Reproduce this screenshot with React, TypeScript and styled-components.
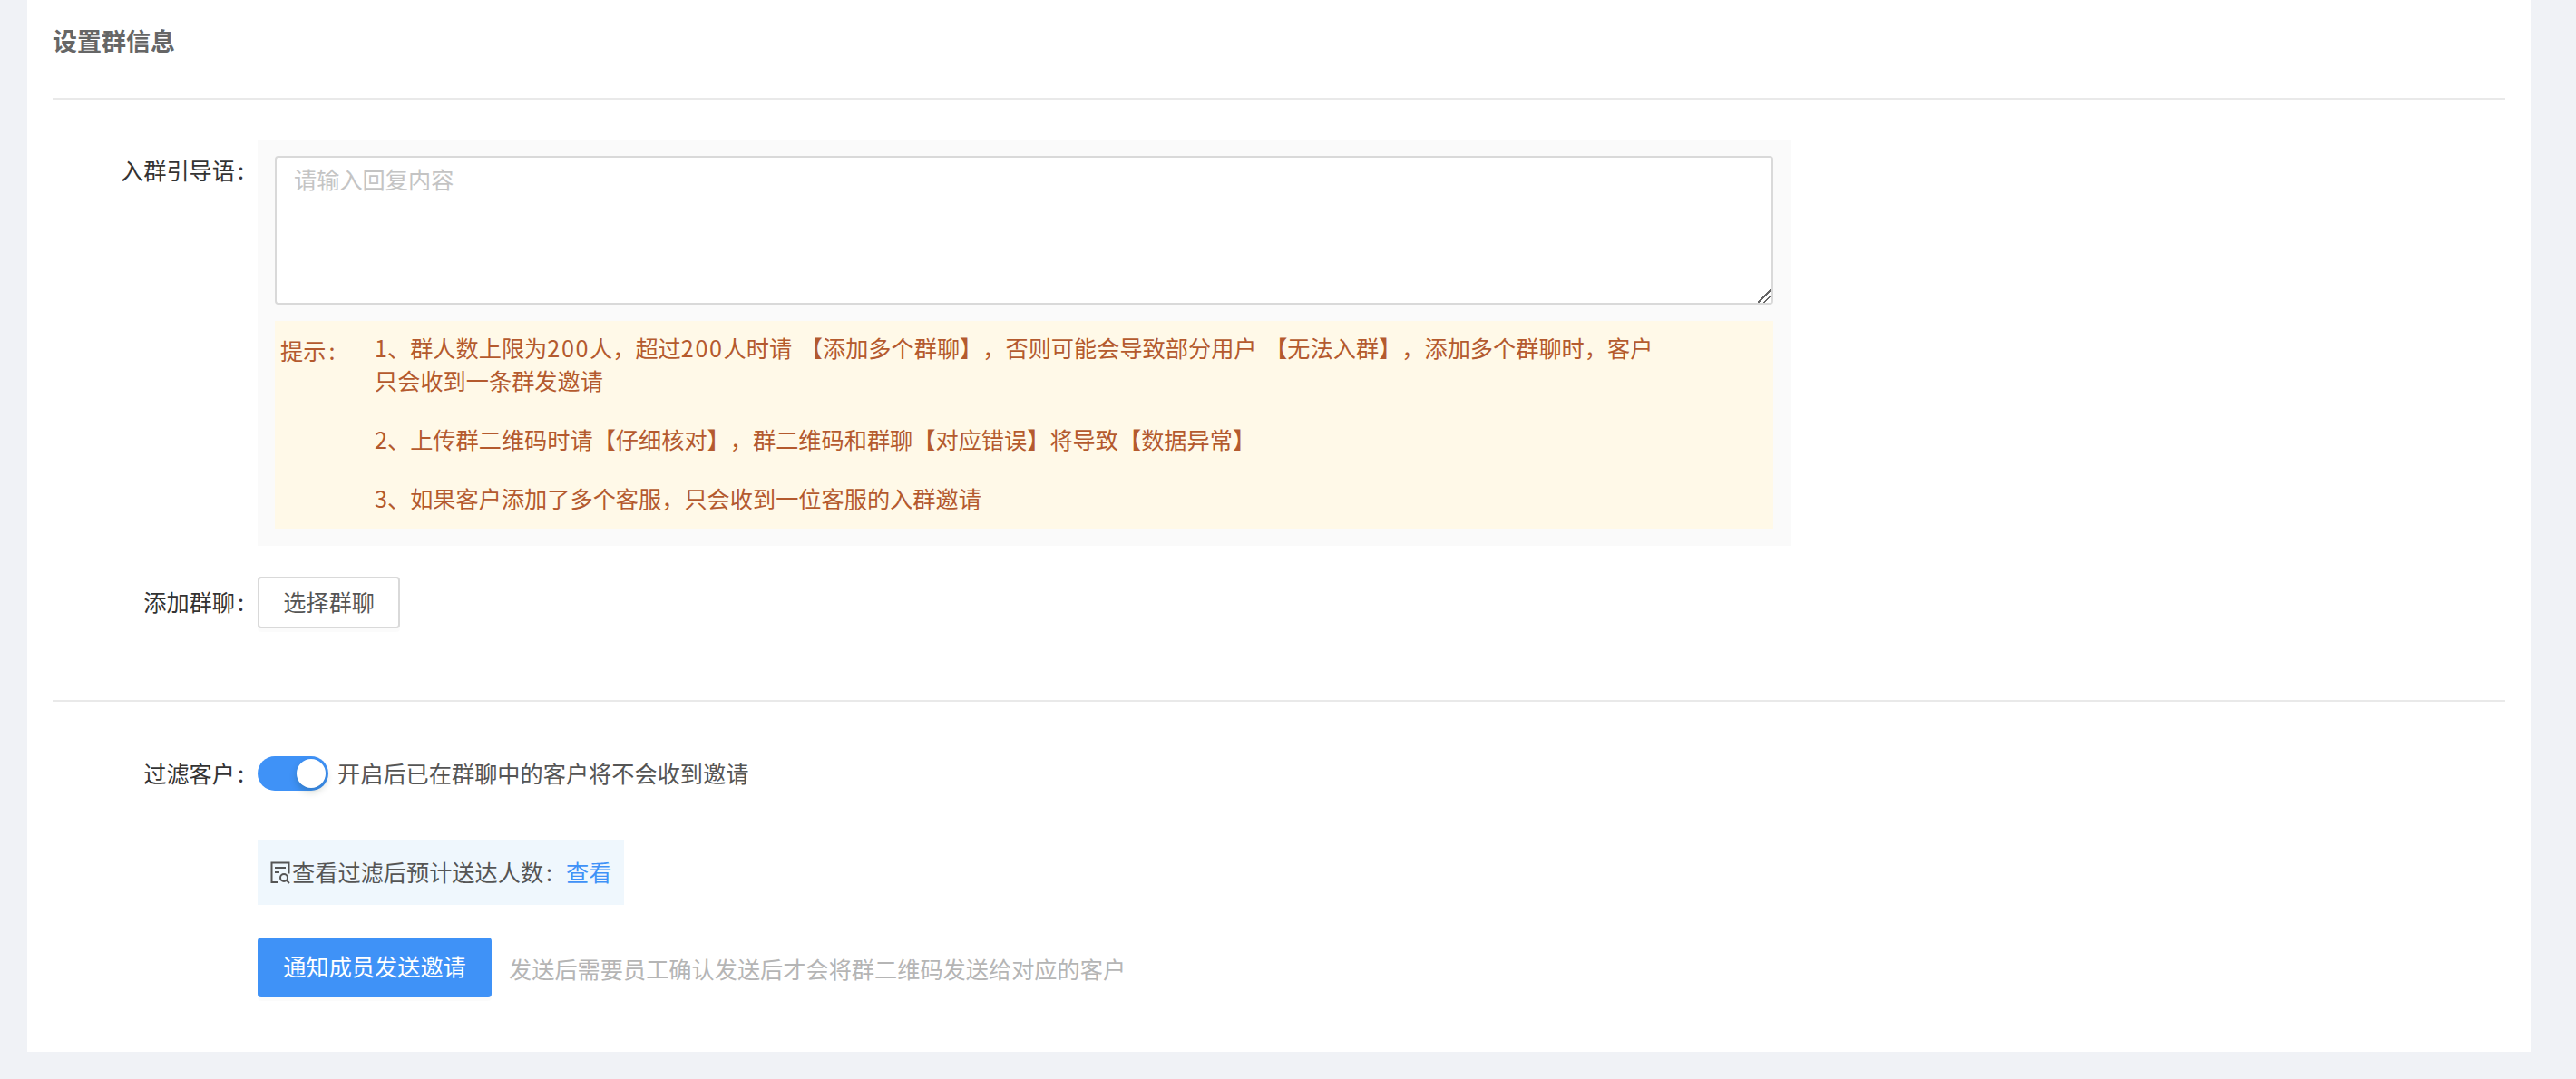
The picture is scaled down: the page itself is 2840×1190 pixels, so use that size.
import React from "react";
import styled, { createGlobalStyle } from "styled-components";

const GlobalStyle = createGlobalStyle`
  html, body {
    margin: 0;
    padding: 0;
    background: #f0f2f6;
  }
  body {
    font-family: "Noto Sans CJK SC", "Noto Sans", sans-serif;
    font-size: 25.2px;
    color: #555;
    text-spacing-trim: space-all;
  }
`;

const Page = styled.div`
  box-sizing: border-box;
  width: 2840px;
  height: 1190px;
  padding: 0 50px 30px 30px;
  overflow: hidden;
`;

const Card = styled.div`
  box-sizing: border-box;
  height: 1160px;
  padding: 0 28px;
  background: #fff;
`;

const Header = styled.div`
  box-sizing: border-box;
  height: 110px;
  padding-top: 27px;
  border-bottom: 2px solid #e9e9e9;
`;

const Title = styled.h2`
  margin: 0;
  font-size: 27px;
  line-height: 36px;
  font-weight: 600;
  color: #666;
`;

const Divider = styled.div<{ $top: number }>`
  height: 2px;
  background: #e9e9e9;
  margin-top: ${(p) => p.$top}px;
`;

const Row = styled.div<{ $top: number; $center?: boolean }>`
  display: grid;
  grid-template-columns: 226px 1fr;
  margin-top: ${(p) => p.$top}px;
  align-items: ${(p) => (p.$center ? "center" : "start")};
`;

const Label = styled.label<{ $top?: number }>`
  padding: ${(p) => p.$top || 0}px 15px ${(p) => (p.$top ? 0 : 3)}px 0;
  text-align: right;
  line-height: 34px;
  color: #333;
`;

const Colon = styled.span`
  margin-left: 3px;
`;

const Panel = styled.div`
  box-sizing: border-box;
  width: 1690px;
  padding: 18px 19px 19px;
  background: #fafafa;
`;

const Input = styled.textarea`
  display: block;
  box-sizing: border-box;
  width: 100%;
  height: 164px;
  padding: 8px 19px;
  border: 2px solid #d9d9d9;
  border-radius: 4px;
  outline: none;
  resize: vertical;
  background: #fff;
  font: inherit;
  line-height: 30px;
  color: #555;

  &::placeholder {
    color: #c4c4c4;
  }

  &::-webkit-resizer {
    background: linear-gradient(
      135deg,
      transparent 46%,
      #666 46%,
      #666 54%,
      transparent 54%,
      transparent 68%,
      #666 68%,
      #666 76%,
      transparent 76%
    );
  }
`;

const Tips = styled.div`
  display: flex;
  box-sizing: border-box;
  height: 229px;
  margin-top: 18px;
  padding: 11px 6px 0;
  background: #fff9e8;
  color: #b45a2e;
  line-height: 36px;
`;

const TipsTitle = styled.div`
  flex: 0 0 104px;
  padding-top: 3px;
`;

const TipsList = styled.div`
  width: 1430px;
  word-spacing: 3px;
`;

const Tip = styled.p`
  margin: 0 0 29px;
`;

const Num = styled.span`
  letter-spacing: 1.6px;
`;

const PlainButton = styled.button`
  box-sizing: border-box;
  width: 157px;
  height: 57px;
  padding: 0 0 3px;
  border: 2px solid #d9d9d9;
  border-radius: 4px;
  background: #fff;
  box-shadow: 0 4px 0 rgba(0, 0, 0, 0.015);
  font: inherit;
  color: #555;
`;

const SwitchLine = styled.div`
  display: flex;
  align-items: center;
  gap: 10px;
  line-height: 34px;
`;

const SwitchText = styled.span`
  padding-bottom: 3px;
`;

const Switch = styled.span`
  display: flex;
  justify-content: flex-end;
  align-items: center;
  box-sizing: border-box;
  width: 78px;
  height: 38px;
  padding-right: 3px;
  border-radius: 19px;
  background: #3f92f7;
`;

const Knob = styled.span`
  width: 32px;
  height: 32px;
  border-radius: 50%;
  background: #fff;
  box-shadow: 0 4px 8px rgba(0, 35, 11, 0.2);
`;

const Offset = styled.div<{ $top: number }>`
  margin: ${(p) => p.$top}px 0 0 226px;
`;

const InfoBox = styled.div`
  display: flex;
  align-items: center;
  box-sizing: border-box;
  width: 404px;
  height: 72px;
  padding: 0 0 3px 14px;
  background: #eff7fd;
  white-space: nowrap;
`;

const InfoIcon = styled.svg`
  flex: none;
  width: 22px;
  height: 25px;
  margin: 3px 2px 0 0;
`;

const InfoLink = styled.a`
  margin-left: 15px;
  color: #3f92f7;
`;

const SendLine = styled.div`
  display: flex;
  align-items: center;
  gap: 19px;
`;

const PrimaryButton = styled.button`
  box-sizing: border-box;
  width: 258px;
  height: 66px;
  padding: 0 0 4px;
  border: none;
  border-radius: 4px;
  background: #3f92f7;
  box-shadow: 0 4px 0 rgba(0, 0, 0, 0.015);
  font: inherit;
  color: #fff;
`;

const Hint = styled.span`
  padding-top: 2px;
  color: #b5b5b5;
`;

const App: React.FC = () => {
  return (
    <Page>
      <GlobalStyle />
      <Card>
        <Header>
          <Title>设置群信息</Title>
        </Header>

        <Row $top={44}>
          <Label $top={16}>入群引导语<Colon>:</Colon></Label>
          <Panel>
            <Input placeholder="请输入回复内容" />
            <Tips>
              <TipsTitle>提示<Colon>:</Colon></TipsTitle>
              <TipsList>
                <Tip>
                  1、群人数上限为<Num>200</Num>人，超过<Num>200</Num>人时请 【添加多个群聊】，否则可能会导致部分用户 【无法入群】，添加多个群聊时，客户
                  <br />
                  只会收到一条群发邀请
                </Tip>
                <Tip>2、上传群二维码时请【仔细核对】，群二维码和群聊【对应错误】将导致【数据异常】</Tip>
                <Tip>3、如果客户添加了多个客服，只会收到一位客服的入群邀请</Tip>
              </TipsList>
            </Tips>
          </Panel>
        </Row>

        <Row $top={34} $center>
          <Label>添加群聊<Colon>:</Colon></Label>
          <div>
            <PlainButton>选择群聊</PlainButton>
          </div>
        </Row>

        <Divider $top={79} />

        <Row $top={60} $center>
          <Label>过滤客户<Colon>:</Colon></Label>
          <SwitchLine>
            <Switch>
              <Knob />
            </Switch>
            <SwitchText>开启后已在群聊中的客户将不会收到邀请</SwitchText>
          </SwitchLine>
        </Row>

        <Offset $top={54}>
          <InfoBox>
            <InfoIcon viewBox="0 0 22 25" fill="none" stroke="#555" strokeWidth="2">
              <path d="M8 23H1.5V1.5h19v12" />
              <path d="M5 7h12M5 12h5" />
              <circle cx="15" cy="18" r="4" />
              <path d="M18 21l3 3" />
            </InfoIcon>
            查看过滤后预计送达人数<Colon>:</Colon>
            <InfoLink>查看</InfoLink>
          </InfoBox>
        </Offset>

        <Offset $top={36}>
          <SendLine>
            <PrimaryButton>通知成员发送邀请</PrimaryButton>
            <Hint>发送后需要员工确认发送后才会将群二维码发送给对应的客户</Hint>
          </SendLine>
        </Offset>
      </Card>
    </Page>
  );
};

export default App;
